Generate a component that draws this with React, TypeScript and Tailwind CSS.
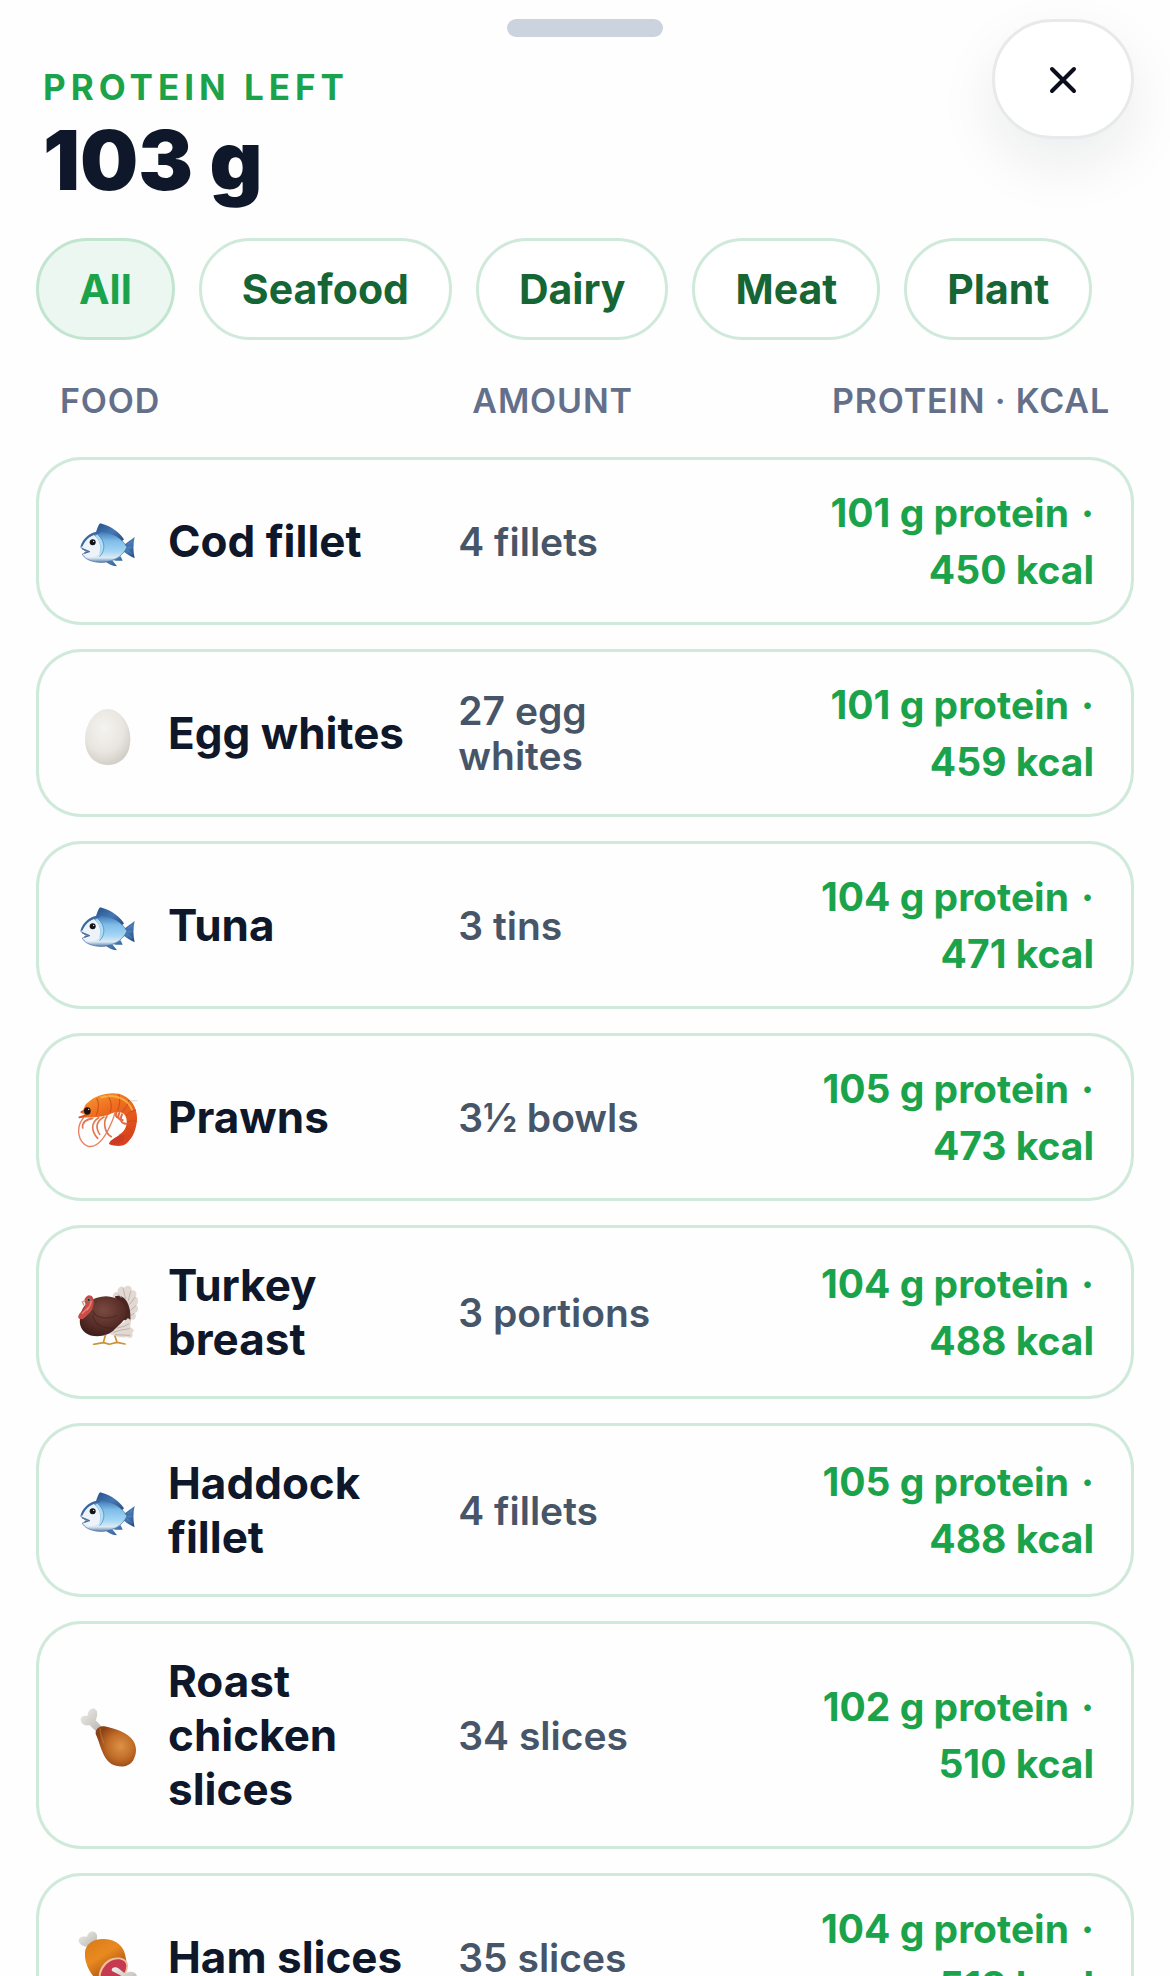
import { useState, type ReactNode } from "react";

type Category = "Seafood" | "Dairy" | "Meat" | "Plant";
type IconName = "fish" | "egg" | "prawn" | "turkey" | "drumstick" | "ham";

type Food = {
  name: string;
  icon: IconName;
  amount: string;
  protein: number;
  kcal: number;
  category: Category;
};

const FILTERS: ("All" | Category)[] = ["All", "Seafood", "Dairy", "Meat", "Plant"];

const FOODS: Food[] = [
  { name: "Cod fillet", icon: "fish", amount: "4 fillets", protein: 101, kcal: 450, category: "Seafood" },
  { name: "Egg whites", icon: "egg", amount: "27 egg whites", protein: 101, kcal: 459, category: "Dairy" },
  { name: "Tuna", icon: "fish", amount: "3 tins", protein: 104, kcal: 471, category: "Seafood" },
  { name: "Prawns", icon: "prawn", amount: "3½ bowls", protein: 105, kcal: 473, category: "Seafood" },
  { name: "Turkey breast", icon: "turkey", amount: "3 portions", protein: 104, kcal: 488, category: "Meat" },
  { name: "Haddock fillet", icon: "fish", amount: "4 fillets", protein: 105, kcal: 488, category: "Seafood" },
  { name: "Roast chicken slices", icon: "drumstick", amount: "34 slices", protein: 102, kcal: 510, category: "Meat" },
  { name: "Ham slices", icon: "ham", amount: "35 slices", protein: 104, kcal: 518, category: "Meat" },
];

function Gradients() {
  return (
    <svg className="absolute h-0 w-0" aria-hidden="true">
      <defs>
        <linearGradient id="fish-body" x1="0" y1="0" x2="0" y2="1">
          <stop offset="0" stopColor="#3f78b5" />
          <stop offset="0.3" stopColor="#7fbde9" />
          <stop offset="0.65" stopColor="#a5d6f3" />
          <stop offset="0.85" stopColor="#dcebf5" />
          <stop offset="1" stopColor="#5b7fab" />
        </linearGradient>
        <linearGradient id="fish-fin" x1="0" y1="0" x2="1" y2="1">
          <stop offset="0" stopColor="#27508a" />
          <stop offset="0.5" stopColor="#4579b4" />
          <stop offset="1" stopColor="#234677" />
        </linearGradient>
        <radialGradient id="egg-shell" cx="0.42" cy="0.35" r="0.7">
          <stop offset="0" stopColor="#f5f3ef" />
          <stop offset="0.6" stopColor="#e9e6e1" />
          <stop offset="1" stopColor="#cfcac3" />
        </radialGradient>
        <linearGradient id="prawn-body" x1="0" y1="0" x2="0.5" y2="1">
          <stop offset="0" stopColor="#f7a038" />
          <stop offset="0.4" stopColor="#ef7020" />
          <stop offset="1" stopColor="#d8421c" />
        </linearGradient>
        <radialGradient id="turkey-body" cx="0.5" cy="0.35" r="0.65">
          <stop offset="0" stopColor="#7a4a40" />
          <stop offset="0.6" stopColor="#5a2f29" />
          <stop offset="1" stopColor="#3f1e1b" />
        </radialGradient>
        <radialGradient id="roast" cx="0.62" cy="0.5" r="0.6">
          <stop offset="0" stopColor="#dc9246" />
          <stop offset="0.55" stopColor="#bf6b27" />
          <stop offset="1" stopColor="#8c4015" />
        </radialGradient>
        <linearGradient id="bone" x1="0" y1="0" x2="1" y2="1">
          <stop offset="0" stopColor="#f0eeea" />
          <stop offset="1" stopColor="#b9b6b0" />
        </linearGradient>
        <linearGradient id="ham-rind" x1="0" y1="0" x2="0.6" y2="1">
          <stop offset="0" stopColor="#d87a18" />
          <stop offset="0.45" stopColor="#e98a20" />
          <stop offset="1" stopColor="#9c4412" />
        </linearGradient>
      </defs>
    </svg>
  );
}

const ICONS: Record<IconName, { viewBox: string; art: ReactNode }> = {
  fish: {
    viewBox: "54 24 180 198",
    art: (
      <>
        <path d="M108 96 C112 86 114 77 120 70 C140 74 172 88 192 118 L180 130 Z" fill="url(#fish-fin)" />
        <path d="M190 136 C202 128 214 118 224 111 C219 132 219 154 224 175 C211 169 199 161 188 152 Z" fill="url(#fish-fin)" />
        <path d="M134 180 L158 182 L171 199 C155 198 143 192 134 180 Z M160 180 L182 169 L188 182 C177 182 169 184 160 180 Z" fill="url(#fish-fin)" />
        <path d="M62 142 C68 115 91 95 126 95 C158 96 185 115 201 141 C187 173 151 190 115 187 C89 184 72 175 67 162 L82 158 Z" fill="url(#fish-body)" stroke="#456b9d" strokeWidth="2" />
        <path d="M66 143 C72 125 85 112 101 105 C119 117 126 142 116 166 C98 174 82 174 69 164 L87 155 Z" fill="#edf3f8" />
        <path d="M112 104 C132 120 137 149 119 170 C126 145 123 124 106 107 Z" fill="#b3dcf3" />
        <path d="M115 106 C137 124 136 153 119 170" fill="none" stroke="#5087b7" strokeWidth="2" />
        <path d="M66 146 L88 155 L73 159" fill="none" stroke="#536b94" strokeWidth="4" strokeLinejoin="round" />
        <path d="M65 139 C73 114 95 99 120 97" fill="none" stroke="#3b659e" strokeWidth="5" />
        <path d="M201 134 L217 124 M202 143 L217 143 M200 149 L217 162" stroke="#608dbd" strokeWidth="2" />
        <circle cx="98" cy="127" r="9" fill="#10151b" />
        <circle cx="101" cy="124" r="2" fill="#fff" />
      </>
    ),
  },
  egg: {
    viewBox: "54 30 180 198",
    art: <path d="M143 57 C178 57 211 98 211 148 C211 198 181 225 144 225 C105 225 75 198 75 148 C75 98 108 57 143 57 Z" fill="url(#egg-shell)" />,
  },
  prawn: {
    viewBox: "54 27 180 198",
    art: (
      <>
        <path d="M72 126 C45 158 54 202 84 214 C115 220 140 181 159 132 L166 111" fill="none" stroke="#e98161" strokeWidth="4" />
        <path d="M98 130 C72 134 66 145 68 159 M116 128 C91 143 94 169 113 190 M132 126 C108 139 106 158 119 178 M141 123 C128 143 134 174 154 185" fill="none" stroke="#e07750" strokeWidth="5" strokeLinecap="round" />
        <path d="M170 112 C165 120 168 127 176 129 M178 114 C171 127 177 136 188 135 M186 118 C178 135 184 146 198 146" fill="none" stroke="#e56b45" strokeWidth="6" strokeLinecap="round" />
        <path d="M61 113 C75 105 70 91 83 83 C103 61 145 50 177 56 C219 67 241 111 227 158 C222 179 213 191 201 204 C190 216 164 215 147 207 C150 192 171 190 179 178 C199 166 206 140 195 121 C184 106 164 109 145 120 C119 128 86 127 58 128 L74 118 Z" fill="url(#prawn-body)" />
        <path d="M110 70 Q121 88 109 121 M140 59 Q160 80 151 113 M176 58 Q184 82 173 106 M207 75 Q203 96 187 110 M228 105 Q211 107 199 122 M231 139 Q213 135 201 141 M220 174 Q205 157 198 159" fill="none" stroke="#c94d16" strokeWidth="3" />
        <path d="M121 68 Q153 57 181 69 Q207 79 217 106" fill="none" stroke="#ffc04d" strokeWidth="6" opacity="0.7" />
        <path d="M148 207 C160 187 178 178 195 181 C192 199 171 216 148 207 Z" fill="#ce3b25" />
        <path d="M213 78 L232 77" stroke="#ccb8a7" strokeWidth="2" />
        <path d="M64 111 L85 101 M58 127 L79 121" stroke="#db4a26" strokeWidth="5" strokeLinecap="round" />
        <ellipse cx="82" cy="108" rx="10" ry="11" fill="#18110f" />
        <circle cx="86" cy="103" r="2" fill="#fff" />
      </>
    ),
  },
  turkey: {
    viewBox: "54 30 180 198",
    art: (
      <>
        <path d="M158 83 C158 71 168 66 173 70 C170 57 186 47 193 56 C202 45 217 52 215 63 C228 63 233 75 227 82 C238 89 236 104 229 108 C239 116 234 130 225 132 C232 144 223 156 213 151 L166 153 Z" fill="#e2d9d3" />
        <path d="M165 82 C188 72 215 98 211 157 L179 151 Z" fill="#4a2522" />
        <path d="M174 75 L184 86 M189 58 L197 90 M212 66 L205 95 M226 84 L209 106 M229 109 L212 124 M222 133 L213 139" stroke="#c0b1aa" strokeWidth="3" />
        <path d="M147 190 C166 169 181 174 203 148 C217 152 211 164 211 174 C224 182 223 188 216 191 C222 203 213 210 202 205 C181 207 165 202 147 194 Z" fill="#e2d9d3" />
        <path d="M160 190 Q184 181 209 179 M172 177 Q195 173 208 164 M165 197 L210 199" fill="none" stroke="#c0b1aa" strokeWidth="3" />
        <path d="M61 142 C66 104 101 83 138 82 C173 83 198 103 201 132 C199 152 179 166 164 181 C143 205 97 208 76 191 C60 178 57 162 61 142 Z" fill="url(#turkey-body)" />
        <path d="M98 125 C107 148 142 153 171 139 M99 137 C101 164 123 179 161 178" fill="none" stroke="#3d211e" strokeWidth="4" opacity="0.5" />
        <path d="M57 149 C50 143 59 132 66 125 C74 116 79 108 75 102 C70 95 76 81 87 79 C104 79 103 102 98 116 C94 130 80 140 68 151 Z" fill="#c94c45" />
        <path d="M76 94 L67 99 L72 109" fill="none" stroke="#c6a58a" strokeWidth="4" />
        <path d="M94 95 Q91 113 80 124 M89 112 L66 134" fill="none" stroke="#e88378" strokeWidth="4" />
        <circle cx="86" cy="93" r="6" fill="#718094" />
        <circle cx="86" cy="93" r="3" fill="#1c1d24" />
        <path d="M136 199 L130 221 M130 221 L101 226 M130 221 L149 226 M165 202 L171 220 M171 220 L151 225 M171 220 L195 225" fill="none" stroke="#ce9035" strokeWidth="5" strokeLinecap="round" />
      </>
    ),
  },
  drumstick: {
    viewBox: "54 39 180 198",
    art: (
      <>
        <path d="M107 126 L88 108 C76 113 62 104 62 93 C61 82 73 78 83 81 C82 68 92 56 103 59 C115 63 113 80 107 94 L124 112 Z" fill="url(#bone)" />
        <path d="M107 128 C109 118 121 109 133 112 C160 118 192 127 213 147 C232 167 232 193 219 215 C206 235 177 237 153 224 C126 207 119 158 107 135 Z" fill="url(#roast)" />
        <path d="M121 118 C118 132 126 145 131 163" fill="none" stroke="#da9a5d" strokeWidth="4" opacity="0.35" />
      </>
    ),
  },
  ham: {
    viewBox: "54 42 180 198",
    art: (
      <>
        <path d="M87 109 C73 112 57 103 56 92 C57 80 70 78 81 81 C83 68 94 61 104 66 C114 73 112 83 109 95 Z" fill="url(#bone)" />
        <path d="M75 132 C73 104 101 83 140 88 C167 90 193 108 197 142 L202 169 C193 207 158 219 119 217 C91 197 73 158 75 132 Z" fill="url(#ham-rind)" />
        <path d="M117 209 C112 184 129 153 157 145 C179 139 201 145 204 164 C205 194 181 220 148 226 C130 228 119 219 117 209 Z" fill="#efc29a" />
        <path d="M122 207 C119 185 136 156 162 149 C181 144 198 151 199 167 C199 191 175 216 148 221 C133 223 124 215 122 207 Z" fill="#c53a50" />
        <path d="M156 183 C151 171 169 168 178 177 L194 190 C211 181 227 185 230 196 C231 204 224 211 215 211 C213 221 194 225 188 215 C181 207 187 201 181 196 Z" fill="url(#bone)" />
      </>
    ),
  },
};

function FoodIcon({ name }: { name: IconName }) {
  const { viewBox, art } = ICONS[name];
  return (
    <svg viewBox={viewBox} className="h-[66px] w-[60px] shrink-0" aria-hidden="true">
      {art}
    </svg>
  );
}

function FoodRow({ food }: { food: Food }) {
  const cell = "border-y-3 border-[#cfe9da] py-[30px] align-middle";
  return (
    <tr>
      <th scope="row" className={`${cell} rounded-l-[45px] border-l-3 pl-[39px] pr-4 text-left font-bold`}>
        <div className="flex items-center gap-[30px]">
          <FoodIcon name={food.icon} />
          <span className="text-[44px] leading-[54px] text-[#0f172a]">{food.name}</span>
        </div>
      </th>
      <td className={`${cell} pr-6 text-[39px] leading-[45px] font-semibold text-[#475569]`}>{food.amount}</td>
      <td className={`${cell} rounded-r-[45px] border-r-3 pr-[37px] text-[39px] leading-[45px] font-bold text-[#1ba34c]`}>
        <div className="flex flex-wrap justify-end gap-3">
          <span>{food.protein} g protein</span>
          <span>·</span>
          <span>{food.kcal} kcal</span>
        </div>
      </td>
    </tr>
  );
}

export default function App() {
  const [filter, setFilter] = useState<"All" | Category>("All");
  const foods = FOODS.filter((f) => filter === "All" || f.category === filter);

  const chipBase = "h-[102px] shrink-0 rounded-full border-3 px-10 text-[41px] leading-[48px] font-bold";
  const chipActive = "border-[#c2e5d0] bg-[#ebf7f0] text-[#1ba34c]";
  const chipIdle = "border-[#cfe9da] bg-white text-[#166534]";
  const headCell = "pt-3.5 pb-2.5 text-[34px] leading-[45px] font-semibold uppercase tracking-wide text-[#64708a]";

  return (
    <main className="flex h-screen flex-col overflow-hidden bg-[#fefefe] font-[Inter,sans-serif]">
      <Gradients />

      <header className="grid grid-cols-[1fr_auto_1fr] items-start px-9 pt-[19px]">
        <div className="pt-[46px] pl-[7px]">
          <p className="text-[35px] leading-[45px] font-bold uppercase tracking-[5px] text-[#1ba34c]">Protein left</p>
          <h1 className="mt-2.5 text-[82px] leading-[82px] font-black text-[#0f172a]">103 g</h1>
        </div>
        <div className="h-[18px] w-[156px] rounded-full bg-[#cbd3df]" />
        <button
          type="button"
          aria-label="Close"
          className="flex h-[120px] w-[142px] items-center justify-center justify-self-end rounded-full border-3 border-[#e8e9eb] bg-white text-[#0b0f1c] shadow-[0_24px_60px_rgba(15,23,42,0.08)]"
        >
          <svg viewBox="0 0 30 30" className="h-[30px] w-[30px]" fill="none" stroke="currentColor" strokeWidth="4" strokeLinecap="round">
            <path d="M4 5L26 27M26 5L4 27" />
          </svg>
        </button>
      </header>

      <div className="mt-9 flex shrink-0 gap-6 px-9">
        {FILTERS.map((f) => (
          <button key={f} type="button" aria-pressed={filter === f} onClick={() => setFilter(f)} className={`${chipBase} ${filter === f ? chipActive : chipIdle}`}>
            {f}
          </button>
        ))}
      </div>

      <div className="min-h-0 flex-1 overflow-y-auto px-9 [scrollbar-width:none]">
        <table className="w-full table-fixed border-separate border-spacing-x-0 border-spacing-y-6">
          <thead>
            <tr>
              <th scope="col" className={`${headCell} w-5/13 pl-6 text-left`}>Food</th>
              <th scope="col" className={`${headCell} w-1/4 pl-[14px] text-left`}>Amount</th>
              <th scope="col" className={`${headCell} pr-6 text-right whitespace-nowrap`}>Protein · kcal</th>
            </tr>
          </thead>
          <tbody>
            {foods.map((food) => (
              <FoodRow key={food.name} food={food} />
            ))}
          </tbody>
        </table>
      </div>
    </main>
  );
}
